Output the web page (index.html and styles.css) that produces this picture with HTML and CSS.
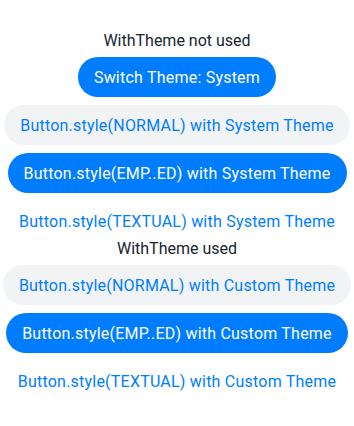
FILE: index.html
```html
<!DOCTYPE html>
<html lang="en">
<head>
    <meta charset="UTF-8">
    <meta name="viewport" content="width=device-width, initial-scale=1.0">
    <title>WithTheme Button Styles</title>
    <link rel="stylesheet" href="styles.css">
</head>
<body>
    <div class="page">
        <div class="section">
            <div class="label">WithTheme not used</div>
            <button class="btn emphasized" onclick="switchTheme()" id="switch-btn">Switch Theme: System</button>
            <button class="btn normal">Button.style(NORMAL) with System Theme</button>
            <button class="btn emphasized">Button.style(EMP..ED) with System Theme</button>
            <button class="btn textual">Button.style(TEXTUAL) with System Theme</button>
        </div>
        <div class="section">
            <div class="label">WithTheme used</div>
            <button class="btn normal">Button.style(NORMAL) with Custom Theme</button>
            <button class="btn emphasized">Button.style(EMP..ED) with Custom Theme</button>
            <button class="btn textual">Button.style(TEXTUAL) with Custom Theme</button>
        </div>
    </div>

    <script>
        function switchTheme() {
            const btn = document.getElementById('switch-btn');
            btn.textContent = btn.textContent.endsWith('System') ? 'Switch Theme: Custom' : 'Switch Theme: System';
        }
    </script>
</body>
</html>
```
FILE: styles.css
```css
body {
    margin: 0;
    background-color: #ffffff;
    font-family: Roboto, "Noto Sans", sans-serif;
}
.page {
    padding-top: 33px;
}
.section {
    display: flex;
    flex-direction: column;
    align-items: center;
    gap: 8px;
}
.label {
    font-size: 16px;
    line-height: 16px;
    color: #182431;
}
.btn {
    height: 40px;
    padding: 0 16px;
    border: none;
    border-radius: 20px;
    font-family: Roboto, "Noto Sans", sans-serif;
    font-size: 16px;
    letter-spacing: 0.22px;
    white-space: nowrap;
    cursor: pointer;
}
.btn.normal {
    background-color: #f1f3f5;
    color: #007dff;
}
.btn.emphasized {
    background-color: #007dff;
    color: #ffffff;
}
.btn.textual {
    background-color: transparent;
    color: #007dff;
}
```
